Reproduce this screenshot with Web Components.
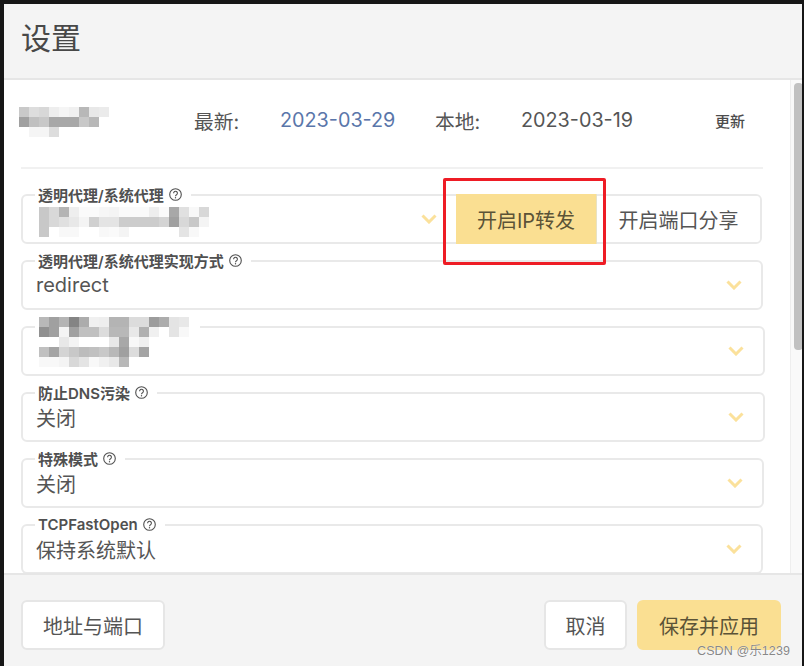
<!DOCTYPE html>
<html lang="zh">
<head>
<meta charset="utf-8">
<title>设置</title>
<style>
  html, body { margin: 0; height: 100%; overflow: hidden; background: #161616; }
  body { font-family: Inter, "Noto Sans CJK SC", sans-serif; color: #555; }
</style>
</head>
<body>

<settings-dialog>
  <span slot="title">设置</span>

  <version-row>
    <pixel-blur slot="name" style="left:19px;top:107px" cells="c9 dd d8 ee f5 f0 b8 e8 eb;a0 c0 c8 a8 a8 a8 c8 b8 ff;ff f5 f5 dd ff ff ff ff ff"></pixel-blur>
    <span slot="latest">2023-03-29</span>
    <span slot="local">2023-03-19</span>
  </version-row>

  <form-field style="margin-right:1px" label="透明代理/系统代理">
    <pixel-blur style="left:16px;top:11px" cells="c8 d8 b4 ee fa fa f6 f4 fa fa fa ee fa a8 e0 f8 d8;c8 d8 e0 e8 f4 d0 e4 e4 cc cc cc cc d4 a0 d8 c8 f4;c8 ff f8 f8 ff ff f8 fa f4 ff ff ff ff ff e4 f8 ff"></pixel-blur>
    <app-button slot="actions" flat primary style="width:141px">开启IP转发</app-button>
    <app-button slot="actions" flat style="width:163px">开启端口分享</app-button>
  </form-field>

  <form-field label="透明代理/系统代理实现方式">redirect</form-field>

  <form-field style="margin-right:-2px" blank-label="165">
    <pixel-blur style="left:16px;top:-11px" cells="b8 a0 b4 84 ac f0 ee b4 b4 dc dc 9c ac e4 e8;90 a0 f4 a0 c0 c0 dc b8 b8 e8 b0 f0 ff e4 f8;ff ff e8 f4 ff ff ff e8 a8 f8 f0 ff ff ff ff;c0 a4 d4 c8 bc c0 c8 b8 a0 dc a4 ff ff ff ff;f8 f8 f4 d8 e4 f8 f0 e8 b8 ff ff ff ff ff ff"></pixel-blur>
  </form-field>

  <form-field style="margin-right:-2px" label="防止DNS污染">关闭</form-field>
  <form-field style="margin-right:-1px" label="特殊模式">关闭</form-field>
  <form-field label="TCPFastOpen">保持系统默认</form-field>

  <app-button slot="footer-left" style="width:144px">地址与端口</app-button>
  <app-button slot="footer-right" style="width:83px">取消</app-button>
  <app-button slot="footer-right" primary style="width:144px">保存并应用</app-button>
</settings-dialog>

<mark-box></mark-box>
<water-mark>CSDN @乐1239</water-mark>

<script>
class SettingsDialog extends HTMLElement {
    constructor() {
        super();
        this.attachShadow({ mode: 'open' });
        this.shadowRoot.innerHTML = `
        <style>
        :host {
            display: flex;
            flex-direction: column;
            height: 662px;
            margin: 4px 2px 0 4px;
            background: #fff;
            overflow: hidden;
        }
        header {
            flex: none;
            height: 74px;
            box-sizing: border-box;
            padding: 0 0 10px 17px;
            display: flex;
            align-items: center;
            background: #f4f4f4;
            font-size: 30px;
            color: #484848;
        }
        #main {
            flex: 1;
            min-height: 0;
            display: flex;
            border-top: 2px solid #e6e6e6;
        }
        #content {
            flex: 1;
            min-width: 0;
            box-sizing: border-box;
            padding: 0 27px 0 17px;
            display: flex;
            flex-direction: column;
            gap: 16px;
            overflow: hidden;
        }
        #track {
            flex: none;
            width: 12px;
            box-sizing: border-box;
            padding: 3px 0 0 3px;
            background: #f9f9f9;
            border-left: 1px solid #eee;
        }
        #thumb {
            width: 9px;
            height: 267px;
            background: #c1c1c1;
            border-radius: 4px;
        }
        footer {
            flex: none;
            height: 93px;
            box-sizing: border-box;
            padding: 25px 21px 0 17px;
            display: flex;
            justify-content: space-between;
            align-items: flex-start;
            background: #f4f4f4;
            border-top: 2px solid #e6e6e6;
        }
        #right { display: flex; gap: 10px; }
        </style>
        <header><slot name="title"></slot></header>
        <div id="main">
            <div id="content"><slot></slot></div>
            <div id="track"><div id="thumb"></div></div>
        </div>
        <footer>
            <div><slot name="footer-left"></slot></div>
            <div id="right"><slot name="footer-right"></slot></div>
        </footer>
        `;
    }
}

class VersionRow extends HTMLElement {
    constructor() {
        super();
        this.attachShadow({ mode: 'open' });
        this.shadowRoot.innerHTML = `
        <style>
        :host {
            display: flex;
            flex: none;
            align-items: center;
            height: 89px;
            box-sizing: border-box;
            padding: 0 0 7px 173px;
            margin-bottom: 9px;
            border-bottom: 2px solid #f1f1f1;
            font-size: 19.8px;
            color: #555;
            white-space: nowrap;
        }
        .key { width: 86px; }
        #latest { color: #5a76aa; width: 155px; }
        #local { width: 194px; }
        #update { font-size: 15px; color: #4c4c4c; font-weight: 500; }
        </style>
        <slot name="name"></slot>
        <span class="key">最新:</span>
        <span id="latest"><slot name="latest"></slot></span>
        <span class="key">本地:</span>
        <span id="local"><slot name="local"></slot></span>
        <span id="update">更新</span>
        `;
    }
}

class FormField extends HTMLElement {
    constructor() {
        super();
        this.attachShadow({ mode: 'open' });
        this.shadowRoot.innerHTML = `
        <style>
        :host {
            display: flex;
            position: relative;
            flex: none;
            height: 50px;
            box-sizing: border-box;
            border: 2px solid #e9e9e9;
            border-radius: 6px;
            background: #fff;
            font-size: 20px;
            color: #555;
        }
        #legend {
            position: absolute;
            left: 12px;
            top: -11px;
            height: 18px;
            box-sizing: border-box;
            padding: 0 9px 0 3px;
            display: flex;
            align-items: center;
            gap: 5px;
            background: #fff;
            font-size: 15px;
            font-weight: 600;
            color: #505050;
            white-space: nowrap;
        }
        #legend svg { width: 13px; height: 13px; flex: none; }
        #value {
            flex: 1;
            min-width: 0;
            padding-left: 13px;
            display: flex;
            align-items: center;
        }
        #chevron { flex: none; align-self: center; width: 16px; height: 10px; margin: 0 20px 0 0; }
        #actions { display: flex; margin-left: -1px; }
        </style>
        <div id="legend"></div>
        <div id="value"><slot></slot></div>
        <svg id="chevron" viewBox="0 0 16 10"><polyline points="1.5,1.5 8,8 14.5,1.5" fill="none" stroke="#fbe19b" stroke-width="3"/></svg>
        <div id="actions"><slot name="actions"></slot></div>
        `;
    }

    connectedCallback() {
        const legend = this.shadowRoot.querySelector('#legend');
        if (this.hasAttribute('label')) {
            legend.textContent = this.getAttribute('label');
            legend.insertAdjacentHTML('beforeend', `
            <svg viewBox="0 0 13 13" fill="none" stroke="#505050">
                <circle cx="6.5" cy="6.5" r="5.8" stroke-width="1.1"/>
                <path d="M4.6 5.2a1.9 1.9 0 1 1 2.9 1.6c-.6.4-1 .7-1 1.4" stroke-width="1.1"/>
                <circle cx="6.5" cy="9.8" r=".7" fill="#505050" stroke="none"/>
            </svg>`);
        } else {
            legend.style.width = this.getAttribute('blank-label') + 'px';
        }
    }
}

class AppButton extends HTMLElement {
    constructor() {
        super();
        this.attachShadow({ mode: 'open' });
        this.shadowRoot.innerHTML = `
        <style>
        :host {
            display: flex;
            align-items: center;
            justify-content: center;
            height: 50px;
            box-sizing: border-box;
            background: #fff;
            border: 2px solid #e6e6e6;
            border-radius: 6px;
            font-size: 20px;
            color: #555;
            white-space: nowrap;
        }
        :host([primary]) { background: #fadf92; border-color: #fadf92; color: #5b5337; }
        :host([flat]) { height: 46px; border: 0; border-radius: 0 4px 4px 0; }
        :host([flat][primary]) { border-radius: 0; height: 50px; margin: -2px 0; border-right: 1px solid #e8e2c4; }
        </style>
        <slot></slot>
        `;
    }
}

// mosaic that hides names in the screenshot, each value is one grey cell
class PixelBlur extends HTMLElement {
    constructor() {
        super();
        this.attachShadow({ mode: 'open' });
        this.shadowRoot.innerHTML = `
        <style>
        :host {
            position: absolute;
            display: grid;
            grid-auto-rows: 10px;
            grid-auto-columns: 10px;
            filter: blur(.4px);
        }
        div { width: 10px; height: 10px; }
        </style>
        `;
    }

    connectedCallback() {
        const rows = this.getAttribute('cells').split(';');
        rows.forEach((row, y) => {
            row.split(' ').forEach((grey, x) => {
                const cell = document.createElement('div');
                cell.style.background = '#' + grey + grey + grey;
                cell.style.gridRow = y + 1;
                cell.style.gridColumn = x + 1;
                this.shadowRoot.appendChild(cell);
            });
        });
    }
}

class MarkBox extends HTMLElement {
    constructor() {
        super();
        this.attachShadow({ mode: 'open' });
        this.shadowRoot.innerHTML = `
        <style>
        :host {
            position: absolute;
            left: 443px;
            top: 178px;
            width: 163px;
            height: 87px;
            box-sizing: border-box;
            border: 3px solid #ee1c25;
            border-radius: 2px;
        }
        </style>
        `;
    }
}

class WaterMark extends HTMLElement {
    constructor() {
        super();
        this.attachShadow({ mode: 'open' });
        this.shadowRoot.innerHTML = `
        <style>
        :host {
            position: absolute;
            left: 697px;
            top: 642px;
            font-family: "Liberation Sans", "Noto Sans CJK SC", sans-serif;
            font-size: 12.5px;
            line-height: 18px;
            letter-spacing: .1px;
            color: rgba(120, 120, 120, .9);
            text-shadow: 0 0 1px #fff;
            white-space: nowrap;
        }
        </style>
        <slot></slot>
        `;
    }
}

customElements.define('settings-dialog', SettingsDialog);
customElements.define('version-row', VersionRow);
customElements.define('form-field', FormField);
customElements.define('app-button', AppButton);
customElements.define('pixel-blur', PixelBlur);
customElements.define('mark-box', MarkBox);
customElements.define('water-mark', WaterMark);
</script>
</body>
</html>
